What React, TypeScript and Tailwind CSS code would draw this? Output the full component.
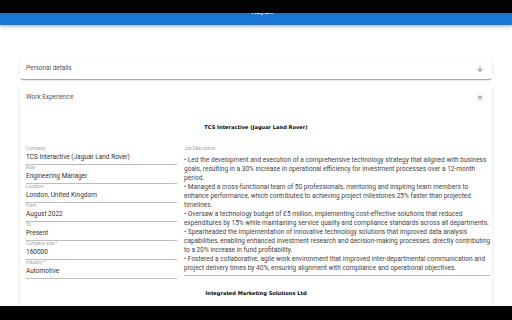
import React from "react";

const lines = [
  "• Led the development and execution of a comprehensive technology strategy that aligned with business",
  "goals, resulting in a 30% increase in operational efficiency for investment processes over a 12-month",
  "period.",
  "• Managed a cross-functional team of 50 professionals, mentoring and inspiring team members to",
  "enhance performance, which contributed to achieving project milestones 25% faster than projected",
  "timelines.",
  "• Oversaw a technology budget of £5 million, implementing cost-effective solutions that reduced",
  "expenditures by 15% while maintaining service quality and compliance standards across all departments.",
  "• Spearheaded the implementation of innovative technology solutions that improved data analysis",
  "capabilities, enabling enhanced investment research and decision-making processes, directly contributing",
  "to a 20% increase in fund profitability.",
  "• Fostered a collaborative, agile work environment that improved inter-departmental communication and",
  "project delivery times by 40%, ensuring alignment with compliance and operational objectives.",
];

const fields: [string, string][] = [
  ["Company", "TCS Interactive (Jaguar Land Rover)"],
  ["Role", "Engineering Manager"],
  ["Location", "London, United Kingdom"],
  ["From", "August 2022"],
  ["To", "Present"],
  ["Company size *", "160000"],
  ["Industry *", "Automotive"],
];

function Arrow({ up }: { up?: boolean }) {
  return (
    <svg
      viewBox="0 0 24 24"
      className={"w-[8px] h-[8px] fill-[#6b6b6b] " + (up ? "rotate-180" : "")}
    >
      <path d="M20 12l-1.41-1.41L13 16.17V4h-2v12.17l-5.58-5.59L4 12l8 8 8-8z" />
    </svg>
  );
}

const shadow =
  "shadow-[0_2px_1px_-1px_rgba(0,0,0,0.2),0_1px_1px_0_rgba(0,0,0,0.14),0_1px_3px_0_rgba(0,0,0,0.12)]";

export default function App() {
  return (
    <div className="w-[512px] h-[320px] flex flex-col overflow-hidden bg-white font-['Roboto',sans-serif]">
      <div className="h-[13px] bg-black shrink-0" />
      <div className="h-[12px] shrink-0 overflow-hidden bg-[#1976d2] shadow-[0_2px_3px_rgba(0,0,0,0.25)] relative z-10">
        <div className="h-[24px] -mt-[13px] flex items-center justify-center pl-[12px] text-white text-[8px] font-medium">
          Rayan
        </div>
      </div>
      <div className="flex-1 overflow-hidden px-[20px] pt-[34px] min-h-0">
        <div className={"h-[20px] bg-white rounded-[2px] flex items-center justify-between pl-[6px] pr-[8px] " + shadow}>
          <span className="text-[6.4px] text-[#555]">Personal details</span>
          <Arrow />
        </div>
        <div className={"mt-[5px] bg-white rounded-[2px] " + shadow}>
          <div className="h-[28px] flex items-center justify-between pl-[6px] pr-[8px]">
            <span className="text-[6.4px] text-[#555]">Work Experience</span>
            <Arrow up />
          </div>
          <div className="mt-[11px] h-[8px] leading-[8px] text-center text-[5.1px] font-bold text-black font-['DejaVu_Sans',sans-serif]">
            TCS Interactive (Jaguar Land Rover)
          </div>
          <div className="mt-[15px] flex gap-[7px] pl-[6px] pr-[7px]">
            <div className="w-[151px] shrink-0 flex flex-col">
              {fields.map(([l, v]) => (
                <div key={l} className="h-[19px] flex flex-col border-b border-[#bdbdbd]">
                  <div className="h-[6px] leading-[6px] text-[4.5px] text-[#9e9e9e]">{l}</div>
                  <div className="h-[10px] leading-[10px] text-[6.5px] text-[#333]">{v}</div>
                </div>
              ))}
            </div>
            <div className="flex-1 flex flex-col">
              <div className="h-[6px] leading-[6px] text-[4.5px] text-[#9e9e9e]">Job Description</div>
              <div className="mt-[3.5px] pb-[2.5px] border-b border-[#bdbdbd] text-[6.55px] leading-[9px] text-[#444]">
                {lines.map((t, i) => (
                  <div key={i} className="whitespace-nowrap">{t}</div>
                ))}
              </div>
            </div>
          </div>
          <div className="mt-[10px] h-[8px] leading-[8px] text-center text-[5.1px] font-bold text-black font-['DejaVu_Sans',sans-serif]">
            Integrated Marketing Solutions Ltd
          </div>
          <div className="h-[20px]" />
        </div>
      </div>
      <div className="h-[14px] bg-black shrink-0" />
    </div>
  );
}
